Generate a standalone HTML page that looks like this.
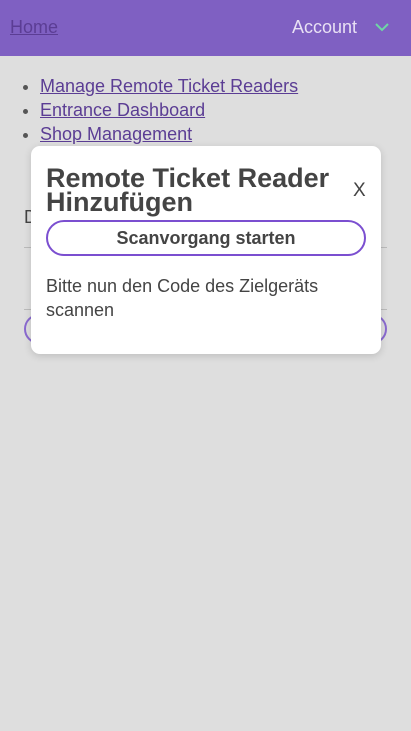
<!DOCTYPE html>
<html><head><style>
body{margin:0;width:411px;height:731px;background:#dedede;font-family:"Liberation Sans",sans-serif;position:relative;overflow:hidden}
.hdr{position:absolute;left:0;top:0;width:411px;height:56px;background:#7f60c2}
.home{position:absolute;left:10px;top:17px;font-size:18px;color:#5b3d94;text-decoration:underline}
.acc{position:absolute;left:292px;top:17px;font-size:18px;color:#e8e0f4}
ul{position:absolute;left:0;top:74px;margin:0;padding-left:40px;font-size:18px;line-height:24px;color:#555}
ul a{color:#5b3d94;text-decoration:underline}
.d{position:absolute;left:24px;top:207px;font-size:18px;color:#444}
.l1{position:absolute;left:24px;width:363px;top:247px;height:1px;background:#bbb}
.l2{position:absolute;left:24px;width:363px;top:309px;height:1px;background:#bbb}
.bb{position:absolute;left:24px;width:359px;top:314px;height:26px;border:2px solid #8a6ad0;border-radius:15px}
.modal{position:absolute;left:31px;top:146px;width:350px;height:208px;background:#fff;border-radius:9px;box-shadow:0 2px 8px rgba(0,0,0,.15)}
h1{position:absolute;left:15px;top:20px;margin:0;font-size:27px;line-height:24px;color:#444;font-weight:bold;white-space:nowrap}
.x{position:absolute;left:322px;top:34px;font-size:19px;color:#444}
.btn{position:absolute;left:15px;top:74px;width:316px;height:32px;border:2px solid #7b4fd0;border-radius:18px;text-align:center;font-weight:bold;font-size:18px;line-height:32px;color:#444}
p{position:absolute;left:15px;top:128px;margin:0;font-size:18px;line-height:24px;color:#444;width:300px}
</style></head><body>
<div class="hdr"><span class="home">Home</span><span class="acc">Account</span>
<svg style="position:absolute;left:375px;top:23px" width="14" height="9"><path d="M1 1L7 7L13 1" stroke="#6fd6a6" stroke-width="2" fill="none"/></svg></div>
<ul><li><a>Manage Remote Ticket Readers</a></li><li><a>Entrance Dashboard</a></li><li><a>Shop Management</a></li></ul>
<div class="d">D</div><div class="l1"></div><div class="l2"></div><div class="bb"></div>
<div class="modal">
<h1>Remote Ticket Reader<br>Hinzufügen</h1><span class="x">X</span>
<div class="btn">Scanvorgang starten</div>
<p>Bitte nun den Code des Zielgeräts scannen</p>
</div>
</body></html>
